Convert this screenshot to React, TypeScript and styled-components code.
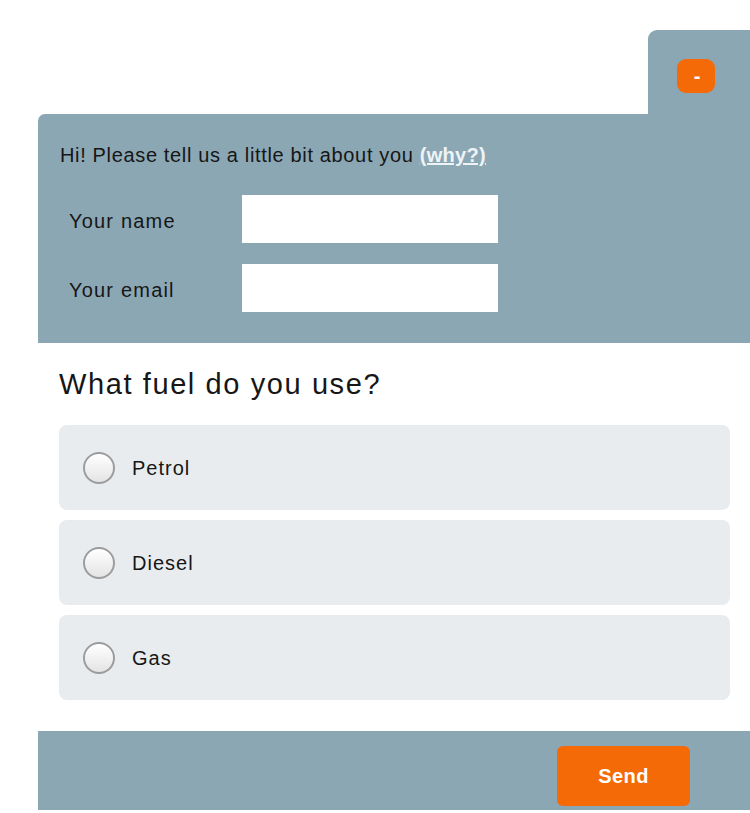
import React from "react";
import styled, { createGlobalStyle } from "styled-components";

const GlobalStyle = createGlobalStyle`
    html, body {
        margin: 0;
        padding: 0;
        background: #ffffff;
        font-family: "Liberation Sans", Arial, Helvetica, sans-serif;
        color: #161616;
    }
`;

const panelColor = "#8ba7b4";
const orange = "#f36a07";

const fuels = ["Petrol", "Diesel", "Gas"];

export default function App() {
    return (
        <PageStyled>
            <GlobalStyle />
            <WidgetStyled>
                <TabRowStyled>
                    <TabStyled>
                        <MinimizeButtonStyled aria-label="minimise">-</MinimizeButtonStyled>
                    </TabStyled>
                </TabRowStyled>
                <HeaderPanelStyled>
                    <IntroStyled>
                        Hi! Please tell us a little bit about you <WhyLinkStyled href="#">(why?)</WhyLinkStyled>
                    </IntroStyled>
                    <FieldsStyled>
                        <FieldRowStyled>
                            <LabelStyled htmlFor="name">Your name</LabelStyled>
                            <InputStyled id="name" type="text" />
                        </FieldRowStyled>
                        <FieldRowStyled>
                            <LabelStyled htmlFor="email">Your email</LabelStyled>
                            <InputStyled id="email" type="email" />
                        </FieldRowStyled>
                    </FieldsStyled>
                </HeaderPanelStyled>
                <BodyStyled>
                    <QuestionStyled>What fuel do you use?</QuestionStyled>
                    <OptionsStyled>
                        {fuels.map((fuel) => (
                            <OptionStyled key={fuel}>
                                <RadioStyled />
                                <OptionTextStyled>{fuel}</OptionTextStyled>
                            </OptionStyled>
                        ))}
                    </OptionsStyled>
                </BodyStyled>
                <FooterStyled>
                    <SendButtonStyled>Send</SendButtonStyled>
                </FooterStyled>
            </WidgetStyled>
        </PageStyled>
    );
}

const PageStyled = styled.div`
    padding: 30px 0 0 38px;
    width: 750px;
    box-sizing: border-box;
`;

const WidgetStyled = styled.div`
    display: flex;
    flex-direction: column;
    width: 712px;
`;

const TabRowStyled = styled.div`
    display: flex;
    justify-content: flex-end;
`;

const TabStyled = styled.div`
    width: 102px;
    height: 84px;
    background: ${panelColor};
    border-top-left-radius: 9px;
    display: flex;
    align-items: flex-start;
    padding: 29px 0 0 29px;
    box-sizing: border-box;
`;

const MinimizeButtonStyled = styled.button`
    width: 38px;
    height: 34px;
    border: none;
    border-radius: 9px;
    background: ${orange};
    color: #ffffff;
    font-family: "Liberation Sans", Arial, sans-serif;
    font-size: 20px;
    font-weight: bold;
    line-height: 34px;
    padding: 0 0 0 2px;
    cursor: pointer;
`;

const HeaderPanelStyled = styled.div`
    background: ${panelColor};
    border-top-left-radius: 7px;
    padding: 30px 0 31px 22px;
    display: flex;
    flex-direction: column;
    gap: 29px;
`;

const IntroStyled = styled.p`
    margin: 0;
    font-size: 20px;
    line-height: 22px;
    letter-spacing: 0.65px;
`;

const WhyLinkStyled = styled.a`
    color: #eef3f6;
    font-weight: bold;
    text-decoration: underline;
    letter-spacing: 0.3px;
`;

const FieldsStyled = styled.div`
    display: flex;
    flex-direction: column;
    gap: 21px;
`;

const FieldRowStyled = styled.div`
    display: grid;
    grid-template-columns: 173px 256px;
    align-items: center;
    padding-left: 9px;
`;

const LabelStyled = styled.label`
    font-size: 20px;
    letter-spacing: 1.2px;
    color: #161616;
    padding-top: 4px;
`;

const InputStyled = styled.input`
    height: 48px;
    border: none;
    background: #ffffff;
    box-sizing: border-box;
    padding: 0 10px;
    font-size: 18px;
    outline: none;
`;

const BodyStyled = styled.div`
    display: flex;
    flex-direction: column;
    padding: 22px 20px 31px 21px;
    gap: 22px;
`;

const QuestionStyled = styled.h2`
    margin: 0;
    font-size: 29px;
    font-weight: normal;
    line-height: 38px;
    letter-spacing: 1.6px;
`;

const OptionsStyled = styled.div`
    display: flex;
    flex-direction: column;
    gap: 10px;
`;

const OptionStyled = styled.label`
    display: flex;
    align-items: center;
    gap: 17px;
    height: 85px;
    padding-left: 24px;
    background: #e8ecef;
    border-radius: 8px;
    box-sizing: border-box;
    cursor: pointer;
`;

const RadioStyled = styled.span`
    width: 32px;
    height: 32px;
    border-radius: 50%;
    box-sizing: border-box;
    border: 2px solid #9c9c9c;
    background: linear-gradient(#ffffff, #e4e4e4);
    box-shadow: inset 0 1px 1px rgba(255, 255, 255, 0.9);
`;

const OptionTextStyled = styled.span`
    font-size: 20px;
    letter-spacing: 1px;
    color: #161616;
    padding-top: 2px;
`;

const FooterStyled = styled.div`
    background: ${panelColor};
    height: 79px;
    display: flex;
    justify-content: flex-end;
    align-items: flex-start;
    padding: 15px 60px 0 0;
    box-sizing: border-box;
`;

const SendButtonStyled = styled.button`
    width: 133px;
    height: 60px;
    border: none;
    border-radius: 6px;
    background: ${orange};
    color: #ffffff;
    font-family: "Liberation Sans", Arial, sans-serif;
    font-size: 20px;
    font-weight: bold;
    letter-spacing: 0.4px;
    cursor: pointer;
`;
